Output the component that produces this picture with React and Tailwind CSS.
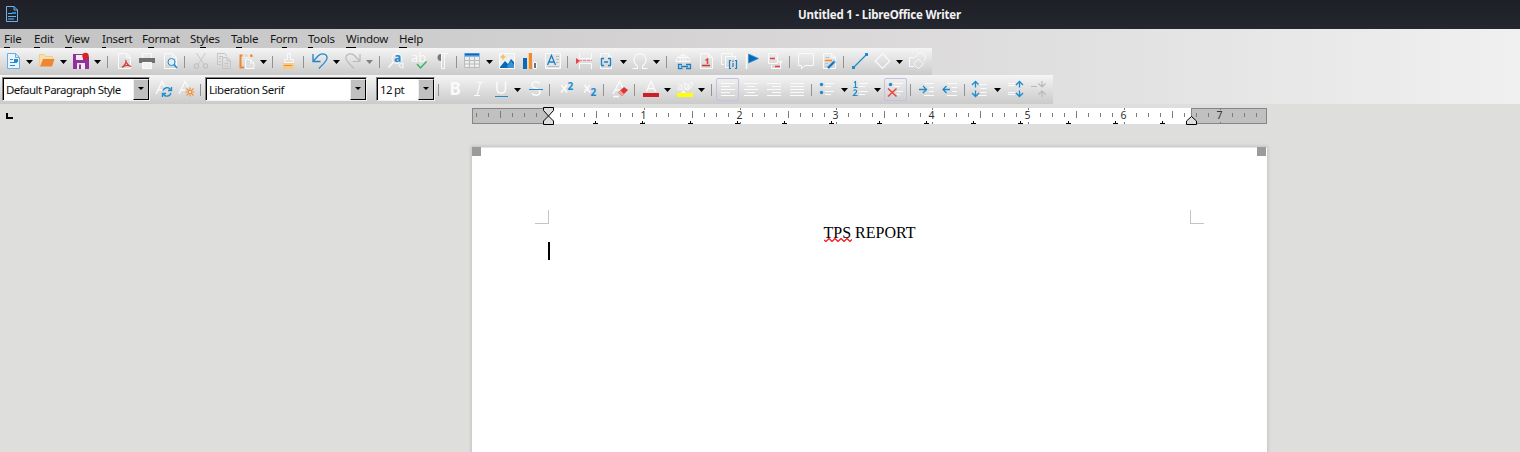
import React from 'react';

const W = '#fafafa';
const B = '#1e8bcd';

const Icon = ({ children, boxed }) => (
  <span className={boxed ? 'flex h-[23px] w-[23px] shrink-0 rounded-[2px] border border-[#c3c1e2] pt-[2px] pl-[3px]' : 'flex h-[23px] w-[23px] shrink-0 pt-[3px] pl-[4px]'}>
    <svg width="16" height="16" viewBox="0 0 16 16" fill="none" stroke={W} strokeWidth="1" className="block shrink-0 overflow-visible">
      {children}
    </svg>
  </span>
);

const Arrow = ({ narrow, dim }) => (
  <span className={narrow ? 'flex w-[10px] shrink-0 pt-px pl-[2px]' : 'flex w-[11px] shrink-0 pt-px pl-[2px]'}>
    <svg width="7" height="4" viewBox="0 0 7 4" className="block shrink-0">
      <path d="M0 0h7L3.5 4z" fill={dim ? '#808080' : '#000'} />
    </svg>
  </span>
);

const Sep = ({ wide }) => (
  <span className={wide ? 'flex w-[9px] shrink-0 pl-[4px]' : 'flex w-[8px] shrink-0 pl-[3px]'}>
    <span className="h-[12px] w-px bg-[#929292]" />
  </span>
);

const Combo = ({ text, className }) => (
  <div className={`mb-px flex h-[24px] shrink-0 border border-t-[#808080] border-l-[#808080] border-r-[#f4f4f4] border-b-[#f4f4f4] ${className}`}>
    <div className="flex min-w-0 flex-1 border-t border-l border-black bg-white">
      <span className="flex-1 whitespace-nowrap pl-[2px] text-[11.5px] leading-[21px] text-[#111]">{text}</span>
      <span className="flex w-[16px] shrink-0 border border-t-[#eee] border-l-[#eee] border-r-black border-b-black bg-[#c0c0c0] pt-[7px] pl-[4px]">
        <svg width="6" height="3" viewBox="0 0 6 3"><path d="M0 0h6L3 3z" fill="#000" /></svg>
      </span>
    </div>
  </div>
);

const Page = ({ stroke = W, fill = 'none', children }) => (
  <>
    <path d="M2.500 .5H10.500L14.500 4.500V15.500H2.500ZM10.500 .5V4.500H14.500" stroke={stroke} fill={fill} />
    {children}
  </>
);

const Menu = ({ before = '', u, after, className }) => (
  <span className={`shrink-0 whitespace-nowrap ${className}`}>
    {before}<span className="border-b border-black pb-px">{u}</span>{after}
  </span>
);

function StandardBar() {
  return (
    <div className="flex h-[27px] w-[932px] items-center bg-linear-to-b from-[#f5f5f5] to-[#cacaca] pl-px">
      <Icon><Page stroke="#6aaee6" fill="#eaf4fc"><path d="M5 6.500h3M5 9.500h7M5 12.500h5" stroke="#2a8ad0" /><path d="M9 6h4v3H9z" fill={B} stroke="none" /></Page></Icon>
      <Arrow />
      <Icon><path d="M.5 13V1.500H5L6.500 3.500H13.500V7" fill="#f6dfae" stroke="#f5cc86" /><path d="M4 6H15.500L13 13.500H1z" fill="#ee8632" stroke="none" /></Icon>
      <Arrow />
      <Icon><path d="M0 1H13L16 4V16H0z" fill="#92319c" stroke="none" /><path d="M3 2h7v5H3zM4 10h8v6H4z" fill="#f2eaf3" stroke="none" /><path d="M6 11.500h2V16H6z" fill="#92319c" stroke="none" /><circle cx="12.500" cy="3" r="3.200" fill="#dd2020" stroke="none" /></Icon>
      <Arrow /><Sep wide />
      <Icon><Page /><path d="M6 14.500C9 12 10.500 10 10 7.500C9.500 6.500 10 12 15 13.500C12 11.500 8 12.500 6 14.500" stroke="#dc3a35" strokeWidth="1.200" /></Icon>
      <Icon><path d="M3.500 5V.5H12.500V5" /><path d="M0 5H16V10H0z" fill="#707070" stroke="none" /><path d="M3.500 9.500H12.500V15.500H3.500z" fill="#f2f2f2" /></Icon>
      <Icon><Page /><circle cx="9.500" cy="9" r="3.500" fill="#e2eff7" stroke={B} /><path d="M12 11.500L15 15" stroke={B} strokeWidth="1.600" /></Icon>
      <Sep />
      <Icon><path d="M3.500 0L10.500 11M12.500 0L5.500 11" stroke="#c9c9c9" /><circle cx="3.500" cy="13" r="2.300" stroke="#bababa" /><circle cx="12.500" cy="13" r="2.300" stroke="#bababa" /></Icon>
      <Icon><path d="M10 3V1.500L9 .5H1.500V11.500H5M3 3.500h4M3 5.500h2M3 8.500h2" stroke="#c4c4c4" /><path d="M6.500 4.500H11L14.500 8V15.500H6.500zM11 4.500V8H14.500M8.500 10.500h4M8.500 13h4" stroke="#c4c4c4" /></Icon>
      <Icon><path d="M4 2.500H1.500V14.500H5M11 2.500H12.500V4" stroke="#ed8733" strokeWidth="2" /><path d="M4 2.500C4 1 6 .5 7 .5S10 1 10 2.500V4.500H4z" stroke="#f8f1e4" fill="#ddd" /><path d="M6.500 6.500H11.500L15 10V15.500H6.500zM11.500 6.500V10H15" fill="#dedede" /></Icon>
      <Arrow narrow /><Sep wide />
      <Icon><path d="M7 .5H9.500V6.500H12.500V9.500H3.500V6.500H6.500V.5z" /><path d="M2 10H13V16H2z" fill="#f6cc80" stroke="none" /><path d="M3 12.500H11" stroke="#ee8a34" /></Icon>
      <Sep />
      <Icon><path d="M1 1V8.500H8.500" stroke="#237fc0" strokeWidth="1.300" /><path d="M1 8.500L6 3C10 -1 15.500 1 15 5.500C14.500 8.500 10 12 7 15.500" stroke="#238bcb" strokeWidth="1.300" /></Icon>
      <Arrow narrow />
      <Icon><path d="M15 1V8.500H7.500M15 8.500L10 3C6 -1 .5 1 1 5.500C1.500 8.500 6 12 9 15.500" stroke="#b9b9b9" strokeWidth="1.200" /></Icon>
      <Arrow dim /><Sep wide />
      <Icon><circle cx="9" cy="5.500" r="5" /><path d="M5.500 9L.5 14.500" strokeWidth="1.500" /><text x="6" y="9" className="text-[12px] font-bold" fill={B} stroke="none">a</text><path d="M15 9V15.500M15 11.500A2 2 0 1 0 15 13.500" /></Icon>
      <Icon><text x="0" y="9" className="text-[13px]" fill={W} stroke="none">ab</text><path d="M6 11L9.500 15L15.500 8.500" stroke="#35b667" strokeWidth="1.500" /></Icon>
      <Icon><path d="M7 1A3.500 3.500 0 0 0 7 8z" fill="#797979" stroke="none" /><path d="M7.500 15.500V.5H14M10.500 .5V15.500H7.500" /></Icon>
      <Sep />
      <Icon><g transform="translate(-1 0)"><path d="M.5 3V14.500H15.500V3M.5 7.500H15.500M.5 11H15.500M5.500 4V15M10.500 4V15" stroke="#bababa" fill="#eee" /><path d="M0 0H16V4H0z" fill="#85baf0" stroke="none" /><path d="M1 1.500H15" stroke="#0869b8" strokeWidth="2" /></g></Icon>
      <Arrow />
      <Icon><path d="M.5 .5H15.500V15.500H.5z" fill="#eee" /><path d="M1 14L6 8L9 11L12 6L15 9V15H1z" fill="#0968b5" stroke="none" /><path d="M8 13L12 8L15 12V15H9z" fill="#3a93d8" stroke="none" /><path d="M4 1.500V6.500M1.500 4H6.500" stroke="#f5bd58" strokeWidth="1.500" /></Icon>
      <Icon><path d="M1 5H5V16H1z" fill="#0b69b8" stroke="none" /><path d="M6 0H10V16H6z" fill="#ef8936" stroke="none" /><path d="M6.500 0V16" stroke="#f9cf86" /><path d="M11.500 9.500H14.500V15.500H11.500z" fill="#707070" /></Icon>
      <Icon><path d="M.5 .5H15.500V15.500H.5z" fill="#e5e5e5" /><path d="M2.500 12L6.500 2.500L10.500 12M4 9H9" stroke="#1982c7" strokeWidth="1.300" /><path d="M11 3.500h3M11 6.500h3M11 9.500h3M3 13.500h11" stroke="#bbb" /></Icon>
      <Sep />
      <Icon><path d="M3.500 0V5.500H15.500V0M3.500 16V10.500H15.500V16" /><path d="M0 5L4 8L0 11z" fill="#ee3e48" stroke="none" /><path d="M3 7.500H16" stroke="#ef858d" strokeDasharray="3 1" /></Icon>
      <Icon><path d="M1.500 5V.5H9.500L12.500 4V6M9.500 .5V4H12.500M1.500 12V15.500H12.500V12" /><path d="M5 5.500H2.500V12.500H5M9 5.500H11.500V12.500H9M5 9H9" stroke="#1b83c7" strokeWidth="1.300" /></Icon>
      <Arrow narrow />
      <Icon><path d="M.5 15.500H5.500V13C.5 10 .5 1 8 1S15.500 10 10.500 13V15.500H15.500" strokeWidth="1.200" /></Icon>
      <Arrow /><Sep wide />
      <Icon><path d="M1 9A7 7 0 0 1 15 9M1 8.500H15M2 4.500H14M8 1V9M5 9C5 5 6 2 8 1C10 2 11 5 11 9" /><path d="M7 11.500H3.500V15.500H7.500M11 11.500H15.500V15.500H11M6 13.500H13" stroke="#1c81c4" strokeWidth="1.300" /></Icon>
      <Icon><Page /><path d="M4 12.500H12" stroke="#c33" strokeWidth="1.500" /><path d="M7.500 7.500L9.500 6V11" stroke="#e73e3e" strokeWidth="1.500" /></Icon>
      <Icon><path d="M3 11.500H.5V.5H11.500V3M8 14.500H4.500V3.500H14.500V7" /><path d="M10 7.500H8.500V15.500H10M14 7.500H15.500V15.500H14M12 10V14M12 7.500V9" stroke="#1a80c2" strokeWidth="1.200" /></Icon>
      <Icon><path d="M2.500 1V16" strokeWidth="1.500" /><path d="M4.500 1L14.500 5.500L4.500 10z" fill="#0969b9" stroke="#338dcd" strokeWidth=".7" /></Icon>
      <Icon><path d="M1.500 10.500V.5H10.500V10.500z" /><path d="M7.500 5.500H10.500M13.500 7V15.500H4.500V12M11 8L13.500 10.500L15.500 8" /><path d="M3 5.500H8M8 13.500H13" stroke="#e7393c" strokeWidth="1.500" /></Icon>
      <Sep />
      <Icon><path d="M.5 .5H15.500V12.500H7L3.500 15.500V12.500H.5z" /></Icon>
      <Icon><Page /><path d="M4.500 4.500H8M4.500 10.500H7M4.500 13.500H6" stroke="#bbb" /><path d="M4 7.500H11" stroke="#f1892f" strokeWidth="1.500" /><path d="M7 15L14 8" stroke="#6aace0" strokeWidth="3" /><path d="M7 15L13 9" stroke="#0766b4" strokeWidth="1.500" /></Icon>
      <Sep />
      <Icon><path d="M2 14L14 2" stroke={B} strokeWidth="1.300" /><path d="M0 13h3v3H0zM13 0h3v3H13z" fill={B} stroke="none" /></Icon>
      <Icon><path d="M7.500 .7L14.800 8L7.500 15.300L.2 8z" strokeWidth="1.200" /></Icon>
      <Arrow />
      <Icon><path d="M5.500 4.500H.5V13.500H5M7 4A4.700 4.700 0 1 1 15 8M9.500 6L14.500 11L9.500 15.500L4.500 11z" /></Icon>
    </div>
  );
}

function FormatBar() {
  return (
    <div className="flex h-[29px] w-[1053px] items-center bg-linear-to-b from-[#f5f5f5] to-[#cacaca] pl-[2px]">
      <Combo text="Default Paragraph Style" className="w-[148px] tracking-[-0.58px]" />
      <span className="flex w-[48px] shrink-0 pl-[2px]">
        <Icon><path d="M0 13L6 .5L9 6M2 9H6" strokeWidth="1.300" /><path d="M7 9.500A4.300 4.300 0 0 1 14.500 8.500M15 12A4.300 4.300 0 0 1 7.500 13.500M15.500 6V9.500H12M6.500 16V12.500H10" stroke={B} strokeWidth="1.300" /></Icon>
        <Icon><path d="M0 13L6 .5L9 6M2 9H6" strokeWidth="1.300" /><path d="M11 6.500V15.500M6.500 11H15.500M7.500 7.500L14.500 14.500M14.500 7.500L7.500 14.500" stroke="#f29237" strokeWidth="1.100" /><circle cx="11" cy="11" r="1.700" fill="#e4e4e4" stroke="#f29237" /></Icon>
      </span>
      <span className="flex w-[7px] shrink-0 pl-[2px]"><span className="h-[12px] w-px bg-[#929292]" /></span>
      <Combo text="Liberation Serif" className="w-[162px] tracking-[-0.44px]" />
      <span className="w-[9px] shrink-0" />
      <Combo text="12 pt" className="w-[59px] tracking-[-0.7px]" />
      <Sep />
      <Icon><text x="2.500" y="14" className="text-[17px] font-bold" fill={W} stroke="none">B</text></Icon>
      <Icon><path d="M7 1.500H13M4 14.500H10M10.500 1.500L7 14.500" strokeWidth="1.200" /></Icon>
      <Icon><path d="M4 .5V8C4 13.500 12.500 13.500 12.500 8V.5" strokeWidth="1.500" /><path d="M2 15.500H15" stroke={B} /></Icon>
      <Arrow />
      <Icon><path d="M13 2.500C10 -.5 4 .5 5 4.500C6 8 13 7 13 11C13 15 7 15 5 12.500" strokeWidth="1.500" /><path d="M2 8.500H16" stroke={B} /></Icon>
      <Sep />
      <Icon><path d="M3.500 4L9 11.500M9 4L3 11.500" strokeWidth="1.500" /><text x="9.500" y="8.500" className="text-[10px] font-bold" fill={B} stroke="none">2</text></Icon>
      <Icon><path d="M3.500 4L9 11.500M9 4L3 11.500" strokeWidth="1.500" /><text x="9.500" y="14.500" className="text-[10px] font-bold" fill={B} stroke="none">2</text></Icon>
      <Sep />
      <Icon><path d="M1 13L7.500 .5L11 7M3 9H8M1 15.500H7" strokeWidth="1.400" /><path d="M6 11.500L12 6L16 9L10 15z" fill="#dc3434" stroke="none" /><path d="M6 11.500L8.500 9.500L12 13L10 15z" fill="#f2a1a1" stroke="none" /></Icon>
      <Sep />
      <Icon><path d="M3.500 10.500L8 .5L12.500 10.500M5 7.500H11" strokeWidth="1.400" /><path d="M0 12H16V16H0z" fill="#cc2024" stroke="none" /></Icon>
      <Arrow />
      <Icon><text x="0" y="9" className="text-[11px]" fill={W} stroke="none">ab</text><path d="M9 8L14 1L16 3L11 9z" /><path d="M4 12L6 9L9 12z" fill={W} stroke="none" /><path d="M0 12H16V16H0z" fill="#ffff00" stroke="none" /></Icon>
      <Arrow /><Sep wide />
      <Icon boxed><path d="M1 2.500H15M1 5.500H10M1 8.500H15M1 11.500H10M1 14.500H15" /></Icon>
      <Icon><path d="M1 2.500H15M4 5.500H12M1 8.500H15M4 11.500H12M1 14.500H15" /></Icon>
      <Icon><path d="M1 2.500H15M6 5.500H15M1 8.500H15M6 11.500H15M1 14.500H15" /></Icon>
      <Icon><path d="M1 2.500H15M1 5.500H15M1 8.500H15M1 11.500H15M1 14.500H15" /></Icon>
      <Sep />
      <Icon><circle cx="1.500" cy="3.500" r="1.700" fill={B} stroke="none" /><circle cx="1.500" cy="11.500" r="1.700" fill={B} stroke="none" /><path d="M5 2.500H14M5 5.500H11M5 10.500H14M5 13.500H11" /></Icon>
      <Arrow narrow />
      <Icon><path d="M1 1.500L2.500 .5V6.500M.5 6.500H4.500M.5 9.500C2 8 4 9 3.500 11L.5 14.500H4.500" stroke={B} strokeWidth="1.200" /><path d="M6 2.500H15M6 5.500H12M6 10.500H15M6 13.500H12" /></Icon>
      <Arrow />
      <span className="w-px shrink-0" />
      <Icon boxed><circle cx="2.500" cy="3.500" r="1.700" fill={B} stroke="none" /><path d="M6 2.500H15M6 5.500H12M9 10.500H15M9 13.500H12" /><path d="M0 7.500L8.500 15.500M8.500 7.500L0 15.500" stroke="#ee4040" strokeWidth="1.500" /></Icon>
      <Sep />
      <Icon><path d="M5 2.500H15M10 6.500H15M10 10.500H15M5 14.500H15" /><path d="M0 8.500H7M4 5L7.500 8.500L4 12" stroke={B} strokeWidth="1.300" /></Icon>
      <Icon><path d="M5 2.500H15M10 6.500H15M10 10.500H15M5 14.500H15" /><path d="M1 8.500H8M4.500 5L1 8.500L4.500 12" stroke={B} strokeWidth="1.300" /></Icon>
      <Sep />
      <Icon><g transform="translate(-1.500 0)"><path d="M4 .5V6.500M.5 4L4 .5L7.500 4M4 9.500V15.500M.5 12L4 15.500L7.500 12" stroke={B} strokeWidth="1.300" /><path d="M7 3.500H15M9 7.500H15M9 11.500H15M7 14.500H15" /></g></Icon>
      <Arrow narrow />
      <span className="w-[2px] shrink-0" />
      <Icon><path d="M11.500 .5V6.500M8 4L11.500 .5L15 4M11.500 9.500V15.500M8 12L11.500 15.500L15 12" stroke={B} strokeWidth="1.300" /><path d="M0 2.500H7M0 4.500H7M0 11.500H7M0 13.500H7" /></Icon>
      <Icon><path d="M11 0V6M7.500 2.500L11 6L14.500 2.500M11 10V16M7.500 13.500L11 10L14.500 13.500M0 5.500H6" stroke="#b9b9b9" strokeWidth="1.200" /></Icon>
    </div>
  );
}

function Ruler() {
  const ticks = [];
  for (let i = -6; i <= 59; i++) {
    if (i !== 0 && i % 8 !== 0) ticks.push(i);
  }
  const stops = Array.from({ length: 13 }, (_, i) => Math.round(595 + i * 47.25) - 472);
  return (
    <div className="relative flex h-4 w-[795px]">
      <div className="w-[76px] border border-r-0 border-[#858585] bg-[#c0c0c0]" />
      <div className="w-[643px] bg-white" />
      <div className="flex-1 border border-[#858585] bg-[#c0c0c0]" />
      <svg width="795" height="18" viewBox="0 0 795 18" className="absolute top-0 left-0 overflow-visible text-[10.5px]">
        {ticks.map((i) => (
          <path key={i} d={Math.abs(i % 8) === 4 ? `M${76.5 + i * 12} 3v7` : `M${76.5 + i * 12} 5v4`} stroke="#7c7c7c" />
        ))}
        {[1, 2, 3, 4, 5, 6, 7].map((n) => (
          <g key={n}>
            <path d={`M${76.5 + n * 96} 0v2M${76.5 + n * 96} 14v2`} stroke="#7c7c7c" />
            <text x={75.5 + n * 96} y="10.500" textAnchor="middle" fill="#333">{n}</text>
          </g>
        ))}
        {stops.map((x) => (
          <path key={x} d={`M${x - 2} 15.500h5M${x + 0.5} 13v3`} stroke="#000" />
        ))}
        <path d="M71.500 -.5H81.500V2.500L76.500 8L81.500 13V16.500H71.500V13L76.500 8L71.500 2.500z" fill="#dededd" stroke="#000" />
        <path d="M719.500 8.500L724.500 13V16.500H714.500V13z" fill="#dededd" stroke="#000" />
      </svg>
    </div>
  );
}

export default function App() {
  return (
    <div className="flex h-[452px] w-[1520px] flex-col overflow-hidden bg-[#dededd] font-['Noto_Sans',sans-serif]">
      <header className="flex h-[29px] items-center bg-linear-to-b from-[#1e1f27] to-[#24272f] pl-[5px]">
        <svg width="14" height="16" viewBox="0 0 14 16" fill="none" stroke="#6fb1e8" className="mb-px">
          <path d="M1.500 .5H9L12.500 4V15.500H1.500zM9 .5V4H12.500M3 7.500h4M3 10.500h8M3 13h6" />
          <path d="M7 6h4v2H7z" fill={B} stroke="none" />
        </svg>
        <h1 className="pl-[779px] text-[11.5px] font-bold tracking-[-0.2px] text-[#f2f2f2]">Untitled 1 - LibreOffice Writer</h1>
      </header>

      <div className="h-[75px] bg-linear-to-r from-[#c3c3c3] via-[#d7d5d6] to-[#f0f0f0]">
        <nav className="flex h-[19px] items-center pl-[4px] text-[11.5px] leading-[14px] tracking-[-0.25px] text-[#161616]">
          <Menu u="F" after="ile" className="w-[30px]" />
          <Menu u="E" after="dit" className="w-[31px]" />
          <Menu u="V" after="iew" className="w-[37px]" />
          <Menu u="I" after="nsert" className="w-[40px]" />
          <Menu before="F" u="o" after="rmat" className="w-[48px]" />
          <Menu before="St" u="y" after="les" className="w-[41px]" />
          <Menu before="T" u="a" after="ble" className="w-[39px]" />
          <Menu before="Fo" u="r" after="m" className="w-[38px]" />
          <Menu u="T" after="ools" className="w-[38px]" />
          <Menu u="W" after="indow" className="w-[53px]" />
          <Menu u="H" after="elp" className="w-[30px]" />
        </nav>
        <StandardBar />
        <FormatBar />
      </div>

      <main className="flex min-h-0 flex-1">
        <aside className="w-[472px] shrink-0 pt-[9px] pl-[6px]">
          <div className="h-[6px] w-[7px] border-b-2 border-l-2 border-black" />
        </aside>
        <section className="flex w-[795px] flex-col pt-[4px]">
          <Ruler />
          <article className="mt-[23px] flex flex-1 flex-col border-t border-[#e6e6e4] bg-white shadow-[0_0_3px_1px_#c2c2c1]">
            <div className="-mt-px flex justify-between">
              <span className="h-[9px] w-[9px] bg-[#9b9b9b]" />
              <span className="mr-px h-[9px] w-[9px] bg-[#9b9b9b]" />
            </div>
            <div className="mt-[54px] flex justify-between pr-[63px] pl-[63px]">
              <span className="h-[14px] w-[14px] border-r border-b border-[#c4c4c4]" />
              <span className="h-[14px] w-[14px] border-b border-l border-[#c4c4c4]" />
            </div>
            <div className="flex h-[18px] justify-center font-['Liberation_Serif',serif] text-[16px] leading-[18px] text-black">
              <p className="whitespace-nowrap">
                <span className="relative">TPS
                  <svg width="28" height="4" viewBox="0 0 28 4" fill="none" className="absolute top-[14px] left-0">
                    <path d="M0 2L2 3.500L5 .5L8 3.500L11 .5L14 3.500L17 .5L20 3.500L23 .5L26 3.500L28 1.500" stroke="#ff1010" strokeWidth="1.200" />
                  </svg>
                </span>{' '}REPORT
              </p>
            </div>
            <div className="ml-[76px] h-[18px] w-[2px] bg-black" />
          </article>
        </section>
      </main>
    </div>
  );
}
